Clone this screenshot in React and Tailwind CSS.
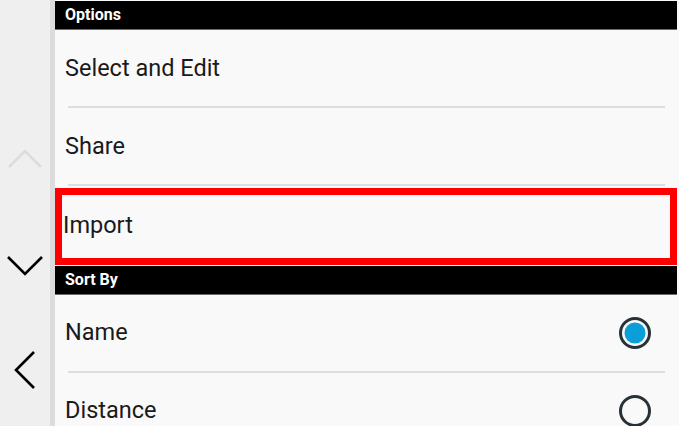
export default function App() {
  const font = { fontFamily: 'Roboto, "Noto Sans", sans-serif' }
  return (
    <div className="flex h-[426px] w-[679px] overflow-hidden bg-[#f9f9f9]" style={font}>
      {/* side rail */}
      <div className="flex w-[55px] shrink-0 flex-col border-r-[5px] border-[#dcdcdc] bg-[#efefef]">
        <svg className="mt-[148px] shrink-0" width="50" height="22" viewBox="0 0 50 22">
          <polyline points="9,19 25,3 41,19" fill="none" stroke="#dcdcdc" strokeWidth="2.6" />
        </svg>
        <svg className="mt-[84px] shrink-0" width="50" height="22" viewBox="0 0 50 22">
          <polyline points="8,3 25,20 42,3" fill="none" stroke="#000" strokeWidth="2.6" />
        </svg>
        <svg className="mt-[74px] shrink-0" width="50" height="40" viewBox="0 0 50 40">
          <polyline points="34,2 16,20 34,38" fill="none" stroke="#000" strokeWidth="2.6" />
        </svg>
      </div>

      <div className="flex w-[622px] flex-col pt-[1px] [&>*]:shrink-0">
        <div className="h-[29px] border-b border-[#6b6b6b] bg-black px-[10px] text-[16px] leading-[28px] font-bold text-white">
          Options
        </div>
        <div className="h-[76px] px-[10px] text-[23.5px] leading-[76px] text-[#1a1a1a]">Select and Edit</div>
        <div className="ml-[13px] h-[2px] w-[597px] bg-[#dddddd]" />
        <div className="h-[76px] px-[10px] text-[23.5px] leading-[76px] text-[#1a1a1a]">Share</div>
        <div className="ml-[13px] h-[2px] w-[597px] bg-[#dddddd]" />
        <div className="mt-[2px] h-[77px] border-[7px] border-[#ff0000] pl-[1px] text-[23.5px] leading-[60px] text-[#1a1a1a]">
          Import
        </div>
        <div className="mt-[1px] h-[29px] border-b border-[#6b6b6b] bg-black px-[10px] text-[16px] leading-[28px] font-bold text-white">
          Sort By
        </div>
        <div className="flex h-[76px] items-center justify-between px-[10px] pr-[25px] text-[23.5px] text-[#1a1a1a]">
          <span>Name</span>
          <svg width="34" height="34" viewBox="0 0 34 34">
            <circle cx="17" cy="17" r="14.5" fill="none" stroke="#263238" strokeWidth="3" />
            <circle cx="17" cy="17" r="10.5" fill="#0a9fd8" />
          </svg>
        </div>
        <div className="ml-[13px] h-[2px] w-[597px] bg-[#dddddd]" />
        <div className="flex h-[76px] items-center justify-between px-[10px] pr-[25px] text-[23.5px] text-[#1a1a1a]">
          <span>Distance</span>
          <svg width="34" height="34" viewBox="0 0 34 34">
            <circle cx="17" cy="17" r="14.5" fill="none" stroke="#263238" strokeWidth="3" />
          </svg>
        </div>
      </div>
    </div>
  )
}
